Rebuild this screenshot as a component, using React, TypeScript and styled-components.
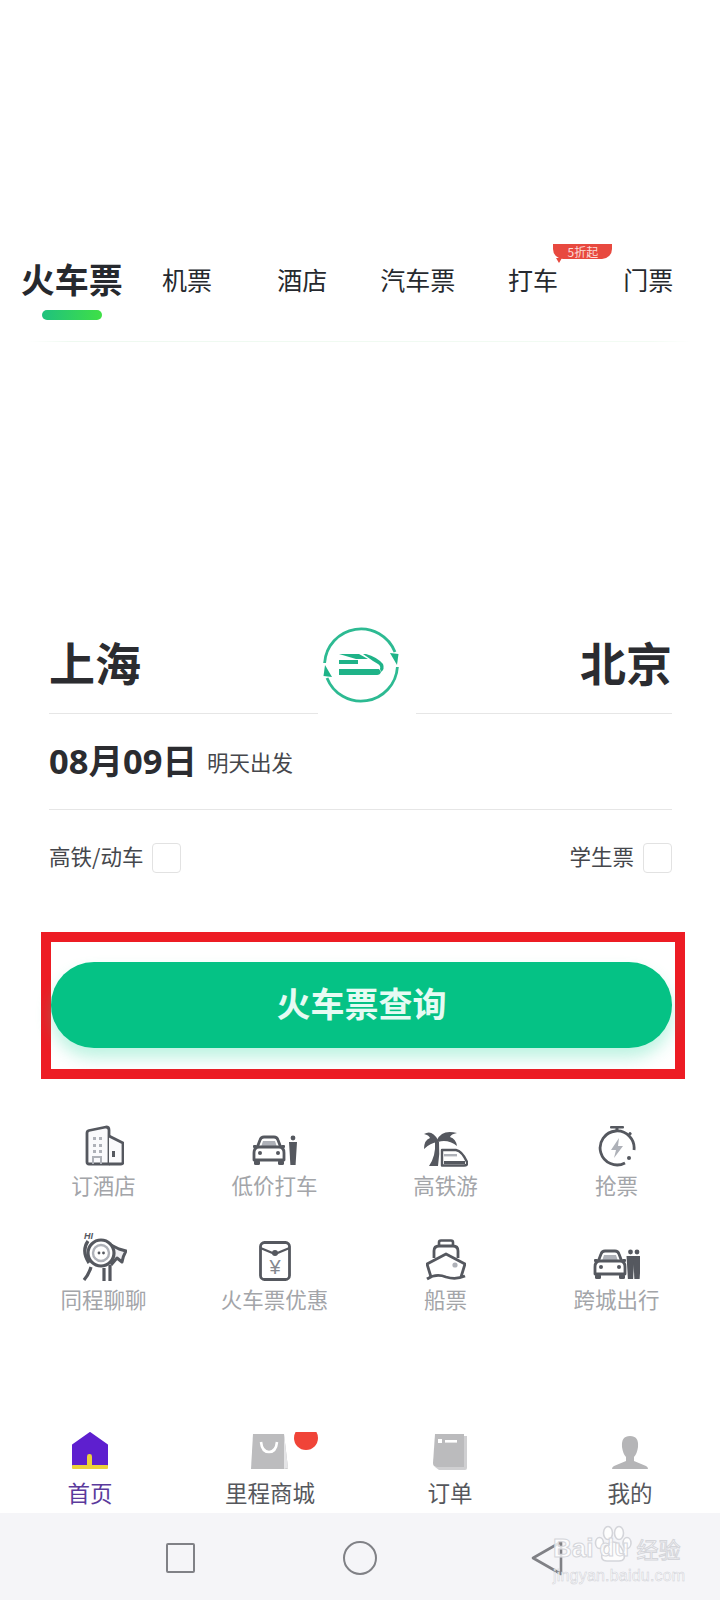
import React from 'react';
import styled, { createGlobalStyle } from 'styled-components';

const GlobalStyle = createGlobalStyle`
  html, body {
    margin: 0;
    padding: 0;
    background: #fff;
  }
  body {
    font-family: "Noto Sans CJK SC", "Noto Sans", sans-serif;
  }
`;

const DARK = '#55585f';
const SOFT = '#aeb1b8';

const BuildingIcon = () => (
  <svg width="40" height="42" viewBox="0 0 40 42">
    <path d="M3 8 Q3 6 5 5.5 L22 2 Q25 2 25 5 V39 H5 Q3 39 3 37 Z" fill="#fafafc" stroke={DARK} strokeWidth="2.8" strokeLinejoin="round" />
    <path d="M25 11 L39 18 V37 Q39 39 37 39 H25" fill="#fafafc" stroke={DARK} strokeWidth="2.8" strokeLinejoin="round" />
    <g fill={SOFT}>
      <rect x="9" y="12" width="3" height="3" />
      <rect x="15" y="12" width="3" height="3" />
      <rect x="9" y="19" width="3" height="3" />
      <rect x="15" y="19" width="3" height="3" />
      <rect x="9" y="25" width="3" height="3" />
      <rect x="15" y="25" width="3" height="3" />
    </g>
    <path d="M9 39 V32 H17 V39" fill="none" stroke={SOFT} strokeWidth="2" />
    <rect x="28" y="26" width="3" height="6" fill={DARK} />
  </svg>
);

const Car = () => (
  <g>
    <path d="M5 13 L8 5 Q9 2 12 2 H22 Q25 2 26 5 L29 13" fill="#fff" stroke={DARK} strokeWidth="2.8" />
    <path d="M9 12 L11 6 H23 L25 12 Z" fill={SOFT} />
    <path d="M2 18 Q2 12 7 12 H27 Q32 12 32 18 V25 H2 Z" fill="#fff" stroke={DARK} strokeWidth="2.8" strokeLinejoin="round" />
    <rect x="1" y="10" width="4" height="3" rx="1" fill={DARK} />
    <rect x="29" y="10" width="4" height="3" rx="1" fill={DARK} />
    <rect x="2" y="25" width="6" height="5" rx="1.5" fill={DARK} />
    <rect x="26" y="25" width="6" height="5" rx="1.5" fill={DARK} />
    <circle cx="8" cy="18" r="2" fill={DARK} />
    <circle cx="26" cy="18" r="2" fill={DARK} />
  </g>
);

const Person = ({ x }: { x: number }) => (
  <g fill={DARK}>
    <circle cx={x} cy="3" r="2.4" />
    <path d={`M${x - 4} 7 H${x + 4} L${x + 2.6} 30 H${x - 2.6} Z`} />
  </g>
);

const TaxiIcon = () => (
  <svg width="46" height="32" viewBox="0 0 46 32">
    <Car />
    <Person x={41} />
  </svg>
);

const PalmIcon = () => (
  <svg width="44" height="37" viewBox="0 0 44 37">
    <path d="M11 12 Q12 26 5 36 H14 Q16 24 15 12 Z" fill={DARK} />
    <path d="M14 10 Q8 -1 0 4 Q5 5 6 8 Q0 10 0 19 Q6 13 14 12 Z" fill={DARK} />
    <path d="M13 10 Q18 -1 33 3 Q27 4 26 7 Q32 9 33 16 Q24 9 14 12 Z" fill={DARK} />
    <path d="M18 20 H32 Q38 21 43 32 Q44 35.5 40 35.5 H18 Z" fill="#fff" stroke={DARK} strokeWidth="2.4" strokeLinejoin="round" />
    <rect x="20" y="24" width="13" height="2.4" fill={SOFT} />
    <rect x="20" y="31" width="21" height="3" fill={DARK} />
  </svg>
);

const WatchIcon = () => (
  <svg width="38" height="42" viewBox="0 0 38 42">
    <rect x="12" y="1" width="14" height="2.6" rx="1" fill={DARK} />
    <rect x="17.5" y="3" width="3" height="4" fill={DARK} />
    <rect x="31" y="7" width="3" height="3" rx="1" transform="rotate(45 32 8)" fill={DARK} />
    <path d="M27 38 A17 17 0 1 1 36 25" fill="none" stroke={DARK} strokeWidth="2.8" />
    <path d="M21 13 L13 25 H18 L16 33 L25 21 H20 Z" fill={SOFT} />
    <circle cx="31" cy="33" r="2" fill={DARK} />
  </svg>
);

const FishIcon = () => (
  <svg width="46" height="50" viewBox="0 0 46 50">
    <text x="3" y="8" fontSize="9" fontWeight="700" fontStyle="italic" fontFamily="Liberation Sans, sans-serif" fill={DARK}>HI</text>
    <path d="M30 14 L38 18 L45 20 Q42 25 41 31 L36 27 L30 34" fill="#eeeef1" stroke={DARK} strokeWidth="3" strokeLinejoin="round" />
    <circle cx="20" cy="22" r="13" fill="#fff" stroke={DARK} strokeWidth="3.2" />
    <circle cx="20" cy="22" r="8" fill="#fff" stroke={SOFT} strokeWidth="2.4" />
    <circle cx="18" cy="22" r="1.4" fill={DARK} />
    <circle cx="22.5" cy="22" r="1.4" fill={DARK} />
    <path d="M7 10 Q0 20 8 32" fill="none" stroke={DARK} strokeWidth="3.2" />
    <path d="M10 36 Q8 43 3 49" fill="none" stroke={DARK} strokeWidth="3.2" />
    <path d="M23 37 V50 M29 34 V50" stroke={DARK} strokeWidth="3.2" />
  </svg>
);

const EnvelopeIcon = () => (
  <svg width="32" height="40" viewBox="0 0 32 40">
    <rect x="1.5" y="1.5" width="29" height="37" rx="4" fill="#fff" stroke={DARK} strokeWidth="2.8" />
    <path d="M1.5 7 L16 13 L30.5 7" fill="none" stroke={DARK} strokeWidth="2.2" />
    <circle cx="16" cy="12" r="3" fill={DARK} />
    <text x="16" y="33" textAnchor="middle" fontSize="20" fontFamily="Liberation Sans, sans-serif" fill="#85888f">¥</text>
  </svg>
);

const ShipIcon = () => (
  <svg width="40" height="42" viewBox="0 0 40 42">
    <rect x="13" y="1.5" width="14" height="6" rx="2" fill="#fff" stroke={DARK} strokeWidth="2.6" />
    <path d="M8 19 V12 Q8 7 13 7 H27 Q32 7 32 12 V19" fill="#fff" stroke={DARK} strokeWidth="2.8" />
    <path d="M5 38 L1 25 L20 15 L39 25 L35 38" fill="#fff" stroke={DARK} strokeWidth="2.8" strokeLinejoin="round" />
    <path d="M1 40 Q10 34 20 38 Q30 41 39 37" fill="none" stroke={DARK} strokeWidth="2.8" />
    <circle cx="29" cy="26" r="2.6" fill={SOFT} />
  </svg>
);

const ShuttleIcon = () => (
  <svg width="47" height="32" viewBox="0 0 47 32">
    <Car />
    <Person x={37.5} />
    <Person x={44} />
  </svg>
);

const HomeIcon = () => (
  <svg width="38" height="38" viewBox="0 0 38 38">
    <path d="M19 1 L36 13 V33 H2 V13 Z" fill="#5e1fcf" stroke="#5e1fcf" strokeWidth="2" strokeLinejoin="round" />
    <rect x="1" y="33" width="36" height="4" rx="1" fill="#ecd23a" />
    <rect x="16" y="22" width="5" height="13" rx="2.4" fill="#ecd23a" />
  </svg>
);

const BagIcon = () => (
  <svg width="38" height="36" viewBox="0 0 38 36">
    <path d="M2 0 H33 L37 34 Q37 35 35 35 H0 Z" fill="#bcbcbe" />
    <path d="M33 0 L37 34 L33 35 Z" fill="#e4e4e6" />
    <path d="M10 8 Q11 18 18 18 Q25 18 26 8" fill="none" stroke="#fff" strokeWidth="2.6" />
  </svg>
);

const BookIcon = () => (
  <svg width="34" height="36" viewBox="0 0 34 36">
    <path d="M31 2 H34 V34 Q34 36 32 36 H6 L2 33 H31 Z" fill="#cfcfd1" />
    <path d="M2 0 H31 V33 H4 Q0 33 0 29 Z" fill="#bbbbbd" />
    <rect x="5" y="5" width="4" height="4" fill="#fff" />
    <rect x="12" y="6" width="12" height="2.6" fill="#fff" />
  </svg>
);

const UserIcon = () => (
  <svg width="36" height="34" viewBox="0 0 36 34">
    <path d="M18 0 Q27 0 26 11 Q25 18 22 21 V25 L34 30 Q36 31 36 33 H0 Q0 31 2 30 L14 25 V21 Q11 18 10 11 Q9 0 18 0 Z" fill="#b5b5b7" />
  </svg>
);

const SwapIcon = () => (
  <svg width="76" height="76" viewBox="0 0 76 76">
    <path d="M1.6 36 A36.5 36.5 0 0 1 72 25" fill="none" stroke="#2dba92" strokeWidth="2.8" />
    <path d="M74.4 40 A36.5 36.5 0 0 1 4 51" fill="none" stroke="#2dba92" strokeWidth="2.8" />
    <path d="M67 26 L75.5 27 L74 38 Z" fill="#1fb388" />
    <path d="M9 50 L0.5 49 L2 38 Z" fill="#1fb388" />
    <g fill="#1fb388">
      <path d="M16 27 H36 L45 32 H33 Z" />
      <rect x="16" y="33" width="19" height="4" />
      <path d="M16 42 H56 L58 45 Q57 48 54 48 H16 Z" />
      <path d="M40 27 H43 Q54 30 60 37 Q62 42 58 45 L57 42 Q58 39 55 37 L50 34 Z" />
    </g>
  </svg>
);

const PawIcon = () => (
  <svg width="38" height="38" viewBox="0 0 38 38">
    <g fill="rgba(255,255,255,0.75)" stroke="#d4d5da" strokeWidth="1.6">
      <ellipse cx="5.5" cy="18" rx="4" ry="5.5" />
      <ellipse cx="14" cy="8" rx="4.5" ry="6.5" />
      <ellipse cx="25" cy="8" rx="4.5" ry="6.5" />
      <ellipse cx="33" cy="18" rx="4" ry="5.5" />
      <path d="M19 17 Q25 17 29 26 Q33 36 25 36 H13 Q5 36 9 26 Q13 17 19 17 Z" />
    </g>
  </svg>
);

const tabs = [
  { name: '火车票', active: true },
  { name: '机票' },
  { name: '酒店' },
  { name: '汽车票' },
  { name: '打车', badge: '5折起' },
  { name: '门票' },
];

const services = [
  { name: '订酒店', icon: <BuildingIcon /> },
  { name: '低价打车', icon: <TaxiIcon /> },
  { name: '高铁游', icon: <PalmIcon /> },
  { name: '抢票', icon: <WatchIcon /> },
  { name: '同程聊聊', icon: <FishIcon /> },
  { name: '火车票优惠', icon: <EnvelopeIcon /> },
  { name: '船票', icon: <ShipIcon /> },
  { name: '跨城出行', icon: <ShuttleIcon /> },
];

const App: React.FC = () => {
  return (
    <Page>
      <GlobalStyle />
      <Header>
        {tabs.map((tab) => (
          <Tab key={tab.name}>
            <TabName $active={tab.active}>{tab.name}</TabName>
            {tab.active && <TabBar />}
            {tab.badge && <Badge>{tab.badge}</Badge>}
          </Tab>
        ))}
      </Header>

      <SearchForm>
        <Route>
          <City>上海</City>
          <SwapIcon />
          <City>北京</City>
        </Route>
        <RouteLines>
          <FromLine />
          <ToLine />
        </RouteLines>
        <DateRow>
          <DateText>08月09日</DateText>
          <DateHint>明天出发</DateHint>
        </DateRow>
        <OptionRow>
          <Option>
            <OptionLabel>高铁/动车</OptionLabel>
            <CheckBox />
          </Option>
          <Option>
            <OptionLabel>学生票</OptionLabel>
            <CheckBox />
          </Option>
        </OptionRow>
      </SearchForm>

      <RedFrame>
        <SearchButton>火车票查询</SearchButton>
      </RedFrame>

      <ServiceGrid>
        {services.map((item) => (
          <Service key={item.name}>
            <ServiceIcon>{item.icon}</ServiceIcon>
            <ServiceName>{item.name}</ServiceName>
          </Service>
        ))}
      </ServiceGrid>

      <BottomTabs>
        <BottomTab $active>
          <BottomIcon><HomeIcon /></BottomIcon>
          首页
        </BottomTab>
        <BottomTab>
          <BottomIcon>
            <BagIcon />
            <RedDot />
          </BottomIcon>
          里程商城
        </BottomTab>
        <BottomTab>
          <BottomIcon><BookIcon /></BottomIcon>
          订单
        </BottomTab>
        <BottomTab>
          <BottomIcon><UserIcon /></BottomIcon>
          我的
        </BottomTab>
      </BottomTabs>

      <NavBar>
        <NavSquare />
        <NavCircle />
        <NavBack>
          <svg width="32" height="36" viewBox="0 0 32 36">
            <path d="M30 2 L2 18 L30 34 Z" fill="none" stroke="#808186" strokeWidth="2.6" strokeLinejoin="round" />
          </svg>
        </NavBack>
        <Watermark>
          <WatermarkTop>
            Bai
            <PawSlot>
              <PawIcon />
              <PawText>du</PawText>
            </PawSlot>
            <WatermarkCn>经验</WatermarkCn>
          </WatermarkTop>
          <WatermarkUrl>jingyan.baidu.com</WatermarkUrl>
        </Watermark>
      </NavBar>
    </Page>
  );
};

export default App;

const Page = styled.div`
  width: 720px;
  height: 1600px;
  overflow: hidden;
  background: #fff;
  display: flex;
  flex-direction: column;
`;

const Header = styled.div`
  margin-top: 244px;
  height: 97px;
  padding: 0 14px 0 14px;
  display: grid;
  grid-template-columns: repeat(6, 1fr);
  border-bottom: 1px solid transparent;
  border-image: linear-gradient(90deg, #fff 4%, #eef9f0 10%, #f2fbf3 90%, #fff 96%) 1;
`;

const Tab = styled.div`
  position: relative;
  padding-top: 15px;
  display: flex;
  flex-direction: column;
  align-items: center;
`;

const TabName = styled.div<{ $active?: boolean }>`
  height: 40px;
  line-height: 40px;
  white-space: nowrap;
  color: #26292e;
  font-size: ${(p) => (p.$active ? '34px' : '25px')};
  font-weight: ${(p) => (p.$active ? 700 : 400)};
`;

const TabBar = styled.div`
  width: 60px;
  height: 10px;
  margin-top: 11px;
  border-radius: 5px;
  background: linear-gradient(90deg, #1fc17e, #3fe046);
`;

const Badge = styled.div`
  position: absolute;
  top: 0;
  left: 78px;
  width: 59px;
  height: 15px;
  border-radius: 0 0 10px 10px;
  background: #e8493f;
  color: #fbdcd8;
  font-size: 12px;
  line-height: 15px;
  text-align: center;

  &::after {
    content: '';
    position: absolute;
    left: 3px;
    bottom: -4px;
    border-left: 3px solid transparent;
    border-right: 3px solid transparent;
    border-top: 5px solid #e8493f;
  }
`;

const SearchForm = styled.div`
  margin-top: 285px;
  padding: 0 48px 0 49px;
`;

const Route = styled.div`
  height: 76px;
  display: flex;
  justify-content: space-between;
  align-items: center;
`;

const City = styled.div`
  width: 120px;
  margin-bottom: 8px;
  color: #2b2c30;
  font-size: 46px;
  line-height: 56px;
  font-weight: 700;

  &:last-child {
    text-align: right;
  }
`;

const RouteLines = styled.div`
  margin-top: 10px;
  display: flex;
  justify-content: space-between;
`;

const FromLine = styled.div`
  width: 269px;
  height: 1px;
  background: #e6e6e6;
`;

const ToLine = styled(FromLine)`
  width: 256px;
`;

const DateRow = styled.div`
  height: 96px;
  padding-bottom: 6px;
  box-sizing: border-box;
  display: flex;
  align-items: center;
  gap: 10px;
  border-bottom: 1px solid #e6e6e6;
`;

const DateText = styled.div`
  color: #2b2c30;
  font-size: 34.5px;
  font-weight: 700;
  font-family: "Noto Sans", "Noto Sans CJK SC", sans-serif;
`;

const DateHint = styled.div`
  margin-top: 5px;
  color: #45474c;
  font-size: 21.5px;
`;

const OptionRow = styled.div`
  height: 96px;
  display: flex;
  justify-content: space-between;
  align-items: center;
`;

const Option = styled.div`
  display: flex;
  align-items: center;
  gap: 9px;
  color: #45474c;
  font-size: 21.5px;
`;

const OptionLabel = styled.span`
  margin-bottom: 5px;
`;

const CheckBox = styled.div`
  width: 27px;
  height: 28px;
  border: 1.5px solid #e2e2e2;
  border-radius: 4px;
  background: #fff;
`;

const RedFrame = styled.div`
  margin: 26px 0 0 41px;
  width: 644px;
  height: 147px;
  box-sizing: border-box;
  border: 10px solid #ed1c24;
  padding-top: 20px;
`;

const SearchButton = styled.div`
  width: 621px;
  height: 86px;
  border-radius: 43px;
  background: #05c285;
  box-shadow: 0 10px 16px rgba(40, 215, 160, 0.3);
  color: #e6fbf3;
  font-size: 34px;
  font-weight: 700;
  line-height: 82px;
  text-align: center;
`;

const ServiceGrid = styled.div`
  margin-top: 44px;
  padding-left: 18px;
  display: grid;
  grid-template-columns: repeat(4, 171px);
  row-gap: 37px;
`;

const Service = styled.div`
  display: flex;
  flex-direction: column;
  align-items: center;
  gap: 3px;
`;

const ServiceIcon = styled.div`
  height: 44px;
  display: flex;
  align-items: flex-end;
`;

const ServiceName = styled.div`
  color: #a3a5a9;
  font-size: 21.5px;
  line-height: 30px;
  white-space: nowrap;
`;

const BottomTabs = styled.div`
  margin-top: 118px;
  height: 81px;
  display: grid;
  grid-template-columns: repeat(4, 180px);
`;

const BottomTab = styled.div<{ $active?: boolean }>`
  display: flex;
  flex-direction: column;
  align-items: center;
  gap: 7px;
  color: ${(p) => (p.$active ? '#5b3a9c' : '#55575c')};
  font-size: 22.5px;
  line-height: 30px;
`;

const BottomIcon = styled.div`
  position: relative;
  height: 38px;
  display: flex;
  align-items: flex-end;
`;

const RedDot = styled.div`
  position: absolute;
  top: 0;
  left: 43px;
  width: 24px;
  height: 18px;
  overflow: hidden;

  &::before {
    content: '';
    position: absolute;
    top: -6px;
    left: 0;
    width: 24px;
    height: 24px;
    border-radius: 50%;
    background: #f04438;
  }
`;

const NavBar = styled.div`
  position: relative;
  height: 87px;
  padding: 3px 0 0 90px;
  box-sizing: border-box;
  background: #f5f5f8;
  display: grid;
  grid-template-columns: repeat(3, 180px);
  justify-items: center;
  align-items: center;
`;

const NavSquare = styled.div`
  width: 25px;
  height: 26px;
  border: 2.5px solid #808186;
  border-radius: 2px;
`;

const NavCircle = styled.div`
  width: 30px;
  height: 30px;
  border: 2.5px solid #808186;
  border-radius: 50%;
`;

const NavBack = styled.div`
  margin-left: 14px;
  height: 36px;
`;

const Watermark = styled.div`
  position: absolute;
  left: 553px;
  top: 12px;
  width: 130px;
  color: rgba(255, 255, 255, 0.8);
  font-family: "Liberation Sans", sans-serif;
  -webkit-text-stroke: 1px #d4d5da;
`;

const WatermarkTop = styled.div`
  display: flex;
  align-items: flex-end;
  font-size: 26px;
  font-weight: 700;
  line-height: 30px;
`;

const PawSlot = styled.div`
  position: relative;
  width: 40px;
  height: 38px;
  margin-left: 1px;
`;

const PawText = styled.span`
  position: absolute;
  left: 5px;
  bottom: 0;
  font-size: 24px;
`;

const WatermarkCn = styled.span`
  margin-left: 2px;
  font-family: "Noto Sans CJK SC", sans-serif;
  font-size: 22px;
  font-weight: 400;
`;

const WatermarkUrl = styled.div`
  margin-top: 4px;
  font-size: 16px;
  line-height: 18px;
  letter-spacing: 0.2px;
  -webkit-text-stroke: 0.5px #cfd0d6;
`;
